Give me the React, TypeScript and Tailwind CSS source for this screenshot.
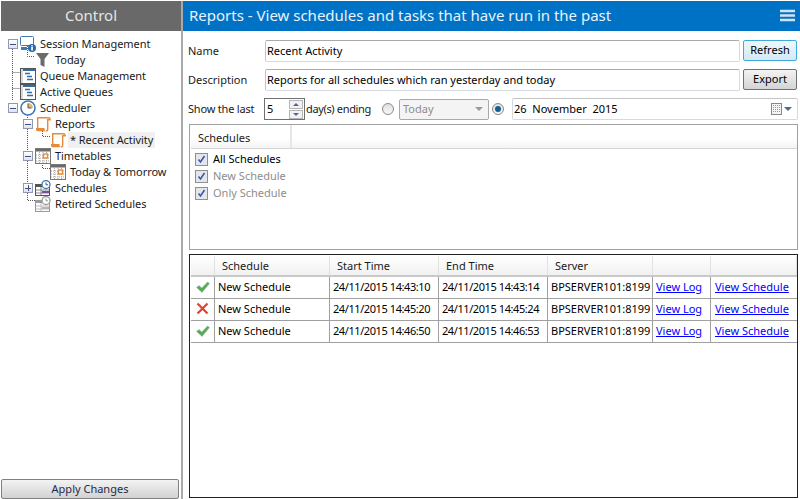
import type { ReactNode } from "react";

const FONT = "font-['Noto_Sans',sans-serif]";

function SessionIcon() {
  return (
    <svg width="16" height="16" viewBox="0 0 16 16" className="shrink-0">
      <rect x="0.5" y="0.5" width="13" height="9" rx="1" fill="#fff" stroke="#3f78b5" />
      <rect x="1" y="11" width="6" height="3" fill="#3f78b5" />
      <path d="M8 12h2" stroke="#3f78b5" />
      <circle cx="12" cy="12" r="4" fill="#2a69ad" />
      <rect x="11.2" y="11" width="1.7" height="3.5" fill="#fff" />
      <rect x="11.2" y="9.3" width="1.7" height="1.2" fill="#fff" />
    </svg>
  );
}

function FunnelIcon() {
  return (
    <svg width="16" height="16" viewBox="0 0 16 16" className="shrink-0">
      <path d="M1 1h13L9.5 7v8l-4-2V7z" fill="#6b6b6b" />
    </svg>
  );
}

function QueueIcon() {
  return (
    <svg width="16" height="16" viewBox="0 0 16 16" className="shrink-0">
      <rect x="0.5" y="0.5" width="15" height="15" fill="#fff" stroke="#555" />
      <rect x="1" y="1" width="14" height="2" fill="#2f6ca8" />
      <rect x="1" y="1" width="2" height="14" fill="#d8d8d8" />
      <path d="M5 5.5h5M7 8.5h5M7 11.5h6" stroke="#2f6ca8" strokeWidth="1.6" />
    </svg>
  );
}

function ClockIcon() {
  return (
    <svg width="16" height="16" viewBox="0 0 16 16" className="shrink-0">
      <circle cx="8" cy="8" r="7" fill="#fff" stroke="#3f78b5" strokeWidth="1.6" />
      <path d="M8 3v5h5a5 5 0 0 0-5-5z" fill="#e8b664" />
      <path d="M8 3.5V8h3.5" stroke="#555" fill="none" />
    </svg>
  );
}

function ScrollIcon() {
  return (
    <svg width="15" height="16" viewBox="0 0 15 16" className="shrink-0">
      <path
        d="M1.7 12V1.7h10.8c1 0 1.6.8 1.6 2h-2.4V13c0 1.2-.6 2-1.8 2"
        fill="#fff"
        stroke="#e78a3a"
        strokeWidth="1.4"
      />
      <path d="M0 12h8.5v.8c0 1 .3 1.7.8 2.4H1.5C.6 15.2 0 14 0 13z" fill="#e78a3a" />
    </svg>
  );
}

function TimetableIcon() {
  return (
    <svg width="16" height="16" viewBox="0 0 16 16" className="shrink-0">
      <rect x="0.5" y="0.5" width="15" height="15" fill="#fff" stroke="#777" />
      <rect x="1" y="1" width="14" height="2.5" fill="#6a6a6a" />
      <path d="M4.5 4v11M8 4v11M11.5 4v11M1 7h14M1 10h14M1 13h14" stroke="#a8a8a8" strokeDasharray="1 1" />
      <rect x="8.5" y="6" width="4" height="4" fill="#fff" stroke="#e78a3a" strokeWidth="1.4" />
    </svg>
  );
}

function SchedulesIcon({ retired }: { retired?: boolean }) {
  const main = retired ? "#9a9a9a" : "#555";
  return (
    <svg width="16" height="16" viewBox="0 0 16 16" className="shrink-0">
      <rect x="0.5" y="4.5" width="14" height="11" fill="#fff" stroke={main} />
      <rect x="1" y="5" width="6" height="2" fill={main} />
      <path d="M1 10h13M1 13h13M6 7v8" stroke={retired ? "#bbb" : "#888"} />
      <rect x="7" y="11" width="7" height="2" fill={retired ? "#b5b5b5" : "#7d4fa0"} />
      <circle cx="11" cy="4.5" r="4" fill="#fff" stroke={retired ? "#9a9a9a" : "#3f78b5"} strokeWidth="1.3" />
      <path d="M11 2.5v2.3h2" stroke={main} fill="none" />
    </svg>
  );
}

function Expander({ open }: { open: boolean }) {
  return (
    <span className="relative z-10 flex h-[10px] w-[10px] shrink-0 items-center justify-center border border-[#8f9bad] bg-gradient-to-b from-white to-[#dfe3ea]">
      <span className="h-px w-[6px] bg-[#3d4f8c]" />
      {!open && <span className="absolute h-[6px] w-px bg-[#3d4f8c]" />}
    </span>
  );
}

type Node = {
  label: string;
  left: string;
  icon: ReactNode;
  exp?: { pad: string; open: boolean };
  selected?: boolean;
};

const tree: Node[] = [
  { label: "Session Management", left: "pl-[19px]", icon: <SessionIcon />, exp: { pad: "left-[7px]", open: true } },
  { label: "Today", left: "pl-[34px]", icon: <FunnelIcon /> },
  { label: "Queue Management", left: "pl-[19px]", icon: <QueueIcon /> },
  { label: "Active Queues", left: "pl-[19px]", icon: <QueueIcon /> },
  { label: "Scheduler", left: "pl-[19px]", icon: <ClockIcon />, exp: { pad: "left-[7px]", open: true } },
  { label: "Reports", left: "pl-[35px]", icon: <ScrollIcon />, exp: { pad: "left-[22px]", open: true } },
  { label: "* Recent Activity", left: "pl-[50px]", icon: <ScrollIcon />, selected: true },
  { label: "Timetables", left: "pl-[34px]", icon: <TimetableIcon />, exp: { pad: "left-[22px]", open: true } },
  { label: "Today & Tomorrow", left: "pl-[49px]", icon: <TimetableIcon /> },
  { label: "Schedules", left: "pl-[34px]", icon: <SchedulesIcon />, exp: { pad: "left-[22px]", open: false } },
  { label: "Retired Schedules", left: "pl-[34px]", icon: <SchedulesIcon retired /> },
];

function TreeLines() {
  return (
    <svg width="70" height="180" className="absolute left-0 top-0" stroke="#555" strokeDasharray="1 1" fill="none">
      <path d="M11.5 14V69M11.5 41.5H19M11.5 57.5H19M26.5 13V25.5H34" />
      <path d="M26.5 78V169.5H34M41.5 94V105.5H50M41.5 126V137.5H49" />
    </svg>
  );
}

function Tree() {
  return (
    <div className="relative pt-[5px]">
      <TreeLines />
      {tree.map((n) => (
        <div key={n.label} className={`relative flex h-[16px] items-center ${n.left}`}>
          {n.exp && (
            <span className={`absolute top-[3px] ${n.exp.pad}`}>
              <Expander open={n.exp.open} />
            </span>
          )}
          <span className="relative">{n.icon}</span>
          <span
            className={`ml-[2px] whitespace-nowrap px-[2px] leading-[16px] tracking-[-0.05px] ${
              n.selected ? "bg-[#f0f0f0]" : ""
            }`}
          >
            {n.label}
          </span>
        </div>
      ))}
    </div>
  );
}

function Input({ value }: { value: string }) {
  return (
    <div className="flex h-[22px] w-[475px] items-center rounded-[2px] border border-[#d5dae2] border-t-[#a9a9a9] border-l-[#c4c4c4] pl-[1px] text-black">
      {value}
    </div>
  );
}

function Button({ children, focused }: { children: ReactNode; focused?: boolean }) {
  return (
    <div
      className={`flex h-[21px] w-[54px] items-center justify-center rounded-[2px] border text-black ${
        focused
          ? "border-[#3fa9dc] bg-gradient-to-b from-[#eef7fc] to-[#d3e9f5]"
          : "border-[#707070] bg-gradient-to-b from-[#f3f3f3] to-[#d4d4d4]"
      }`}
    >
      {children}
    </div>
  );
}

function Radio({ on }: { on?: boolean }) {
  return (
    <span className="flex h-[12px] w-[12px] shrink-0 items-center justify-center rounded-full border border-[#8a8a8a] bg-gradient-to-b from-[#e0e0e0] to-[#f8f8f8]">
      {on && <span className="h-[6px] w-[6px] rounded-full bg-[#16608f]" />}
    </span>
  );
}

function Check({ label, muted }: { label: string; muted?: boolean }) {
  return (
    <div className="flex h-[17px] items-center gap-[5px]">
      <span className="flex h-[13px] w-[13px] items-center justify-center border border-[#8e8f8f] bg-[#e4e6ea]">
        <svg width="9" height="9" viewBox="0 0 9 9">
          <path d="M1.5 4.5l2 2.5 4-6" fill="none" stroke="#3d56a8" strokeWidth="1.6" />
        </svg>
      </span>
      <span className={muted ? "text-[#8d8d8d]" : "text-black"}>{label}</span>
    </div>
  );
}

function Tick() {
  return (
    <svg width="14" height="12" viewBox="0 0 14 12">
      <path d="M0.5 6.5l2.5-2 2.8 2.5L11.5 1l2 1.6L6 11.5z" fill="#5aa85a" stroke="#8fc48f" strokeWidth="0.5" />
    </svg>
  );
}

function Cross() {
  return (
    <svg width="13" height="13" viewBox="0 0 13 13">
      <path d="M1.5 1.5l10 10M11.5 1.5l-10 10" stroke="#e5412d" strokeWidth="2.2" />
    </svg>
  );
}

const runs = [
  { ok: true, start: "24/11/2015 14:43:10", end: "24/11/2015 14:43:14" },
  { ok: false, start: "24/11/2015 14:45:20", end: "24/11/2015 14:45:24" },
  { ok: true, start: "24/11/2015 14:46:50", end: "24/11/2015 14:46:53" },
];

const COLS = "grid grid-cols-[24px_115px_109px_109px_105px_58px_86px]";

function ResultsGrid() {
  const head = ["", "Schedule", "Start Time", "End Time", "Server", "", ""];
  return (
    <div className="ml-px mt-[4px] h-[244px] w-[609px] border border-[#222] pl-px pt-px">
      <div className={`${COLS} h-[21px] border-b-2 border-[#c8c8c8] bg-gradient-to-b from-white to-[#f1f1f1]`}>
        {head.map((h, i) => (
          <div key={i} className="flex items-center border-r border-[#e2e2e2] pl-[7px] pt-px">
            {h}
          </div>
        ))}
      </div>
      {runs.map((r, i) => (
        <div key={i} className={`${COLS} h-[22px] border-b border-[#a0a0a0] text-black`}>
          <div className="flex items-center justify-center border-r border-[#a0a0a0] pb-[2px]">
            {r.ok ? <Tick /> : <Cross />}
          </div>
          <div className="flex items-center border-r border-[#a0a0a0] pl-[3px]">New Schedule</div>
          <div className="flex items-center whitespace-nowrap border-r border-[#a0a0a0] pl-[3px] tracking-[-0.42px]">
            {r.start}
          </div>
          <div className="flex items-center whitespace-nowrap border-r border-[#a0a0a0] pl-[3px] tracking-[-0.42px]">
            {r.end}
          </div>
          <div className="flex items-center border-r border-[#a0a0a0] pl-[3px]">BPSERVER101:8199</div>
          <div className="flex items-center border-r border-[#a0a0a0] pl-[3px] text-[#0000ff] underline">View Log</div>
          <div className="flex items-center pl-[4px] text-[#0000ff] underline">View Schedule</div>
        </div>
      ))}
    </div>
  );
}

export default function App() {
  return (
    <div className={`flex h-[499px] w-[800px] overflow-hidden bg-white pt-px text-[11px] text-[#1a1a1a] ${FONT}`}>
      <aside className="flex w-[183px] shrink-0 flex-col border-r-2 border-[#a9a9a9] pl-px">
        <div className="flex h-[30px] shrink-0 items-center justify-center bg-[#696969] pb-[2px] text-[15px] text-[#e4e4e4]">
          Control
        </div>
        <div className="flex-1">
          <Tree />
        </div>
        <div className="mr-[2px] flex h-[20px] items-center justify-center rounded-[2px] border border-[#808080] bg-gradient-to-b from-[#f3f3f3] to-[#d2d2d2] text-[#1f2a44]">
          Apply Changes
        </div>
      </aside>

      <main className="flex flex-1 flex-col">
        <header className="flex h-[30px] shrink-0 items-center justify-between bg-[#0072c6] pb-[2px] pl-[6px] pr-[5px] text-[15px] text-[#e8f2fa]">
          <span>Reports - View schedules and tasks that have run in the past</span>
          <svg width="15" height="13" viewBox="0 0 15 13">
            <path d="M0 2h15M0 6.5h15M0 11h15" stroke="#cfe3f3" strokeWidth="2.4" />
          </svg>
        </header>

        <div className="flex flex-col pl-[5px] pt-[9px]">
          <div className="flex h-[22px] items-center">
            <span className="w-[77px]">Name</span>
            <Input value="Recent Activity" />
            <span className="ml-[3px] mb-px">
              <Button focused>Refresh</Button>
            </span>
          </div>

          <div className="mt-[7px] flex h-[22px] items-center">
            <span className="w-[77px]">Description</span>
            <Input value="Reports for all schedules which ran yesterday and today" />
            <span className="ml-[3px] mb-px">
              <Button>Export</Button>
            </span>
          </div>

          <div className="mt-[7px] flex h-[22px] items-center">
            <span className="w-[76px] tracking-[-0.2px]">Show the last</span>
            <div className="flex h-[22px] w-[41px] items-center justify-between border border-[#707070] pl-[2px] pr-px text-black">
              5
              <div className="flex flex-col gap-px">
                <span className="flex h-[9px] w-[14px] items-center justify-center border border-[#b5b5b5] bg-[#f2f2f2]">
                  <span className="border-x-[3px] border-b-[3px] border-x-transparent border-b-[#4a6a9a]" />
                </span>
                <span className="flex h-[9px] w-[14px] items-center justify-center border border-[#b5b5b5] bg-[#f2f2f2]">
                  <span className="border-x-[3px] border-t-[3px] border-x-transparent border-t-[#4a6a9a]" />
                </span>
              </div>
            </div>
            <span className="ml-[1px] w-[76px] tracking-[-0.35px]">day(s) ending</span>
            <Radio />
            <div className="ml-[5px] flex h-[21px] w-[90px] items-center justify-between rounded-[2px] border border-[#a9a9a9] bg-[#f4f4f4] pl-[3px] pr-[5px] text-[#8d8d8d]">
              Today
              <span className="border-x-[4px] border-t-[4px] border-x-transparent border-t-[#9a9a9a]" />
            </div>
            <span className="ml-[3px]">
              <Radio on />
            </span>
            <div className="ml-[8px] flex h-[22px] w-[286px] items-center justify-between rounded-[2px] border border-[#d5dae2] border-t-[#c4c4c4] pl-[1px] pr-[5px] text-black">
              <span className="whitespace-pre">26  November  2015</span>
              <span className="flex items-center gap-[2px]">
                <svg width="11" height="12" viewBox="0 0 11 12">
                  <rect x="0.5" y="0.5" width="10" height="11" fill="#f4f4f4" stroke="#888" />
                  <path d="M2 2.5h7M2 4.5h7M2 6.5h7M2 8.5h7" stroke="#999" strokeDasharray="1 1" />
                </svg>
                <span className="border-x-[4px] border-t-[4px] border-x-transparent border-t-[#54688a]" />
              </span>
            </div>
          </div>

          <div className="ml-px mt-[4px] h-[126px] w-[609px] border border-[#a0a0a0] pl-px">
            <div className="flex h-[24px] border-b border-[#d5d5d5] bg-gradient-to-b from-white from-60% to-[#f3f3f3]">
              <div className="flex w-[101px] items-center border-r-2 border-[#e6e6e6] pl-[7px] pt-[3px]">Schedules</div>
            </div>
            <div className="pl-[4px] pt-[2px]">
              <Check label="All Schedules" />
              <Check label="New Schedule" muted />
              <Check label="Only Schedule" muted />
            </div>
          </div>

          <ResultsGrid />
        </div>
      </main>
    </div>
  );
}
